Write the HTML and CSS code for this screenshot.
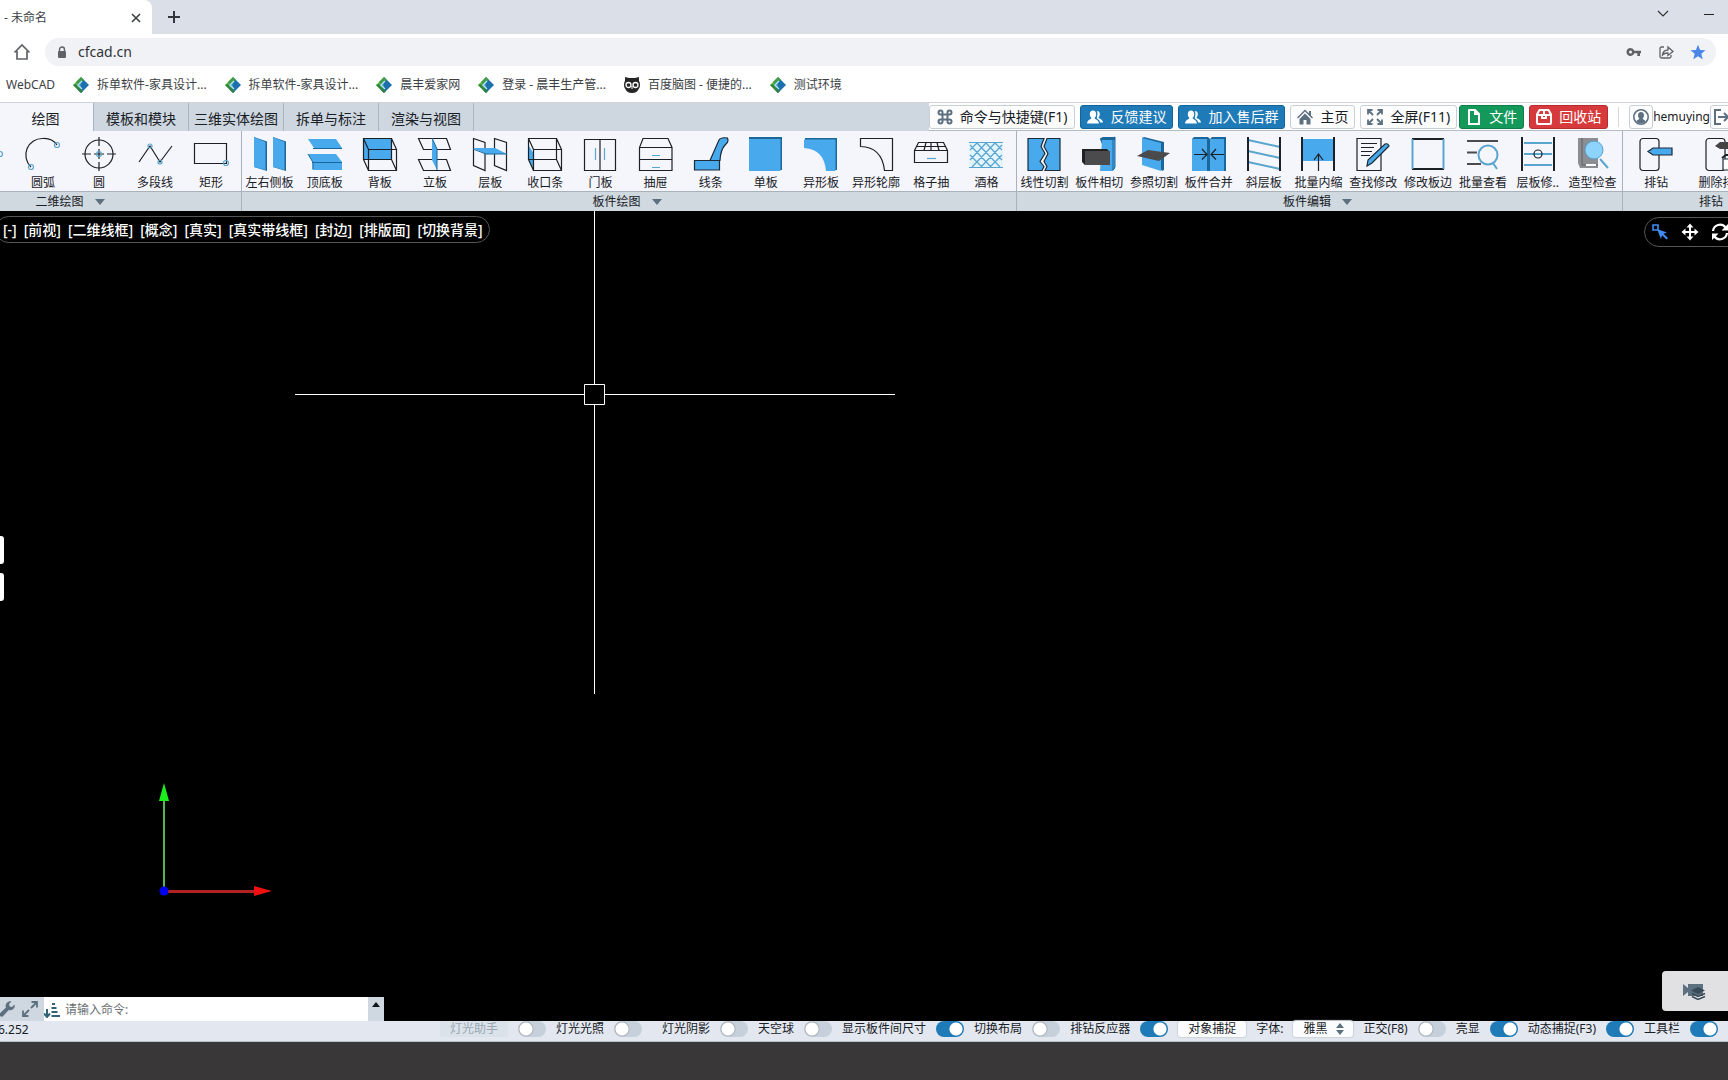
FILE: index.html
```html
<!DOCTYPE html>
<html lang="zh-CN">
<head>
<meta charset="utf-8">
<title>WebCAD - 未命名</title>
<link rel="stylesheet" href="styles.css">
</head>
<body>
<svg class="defs" aria-hidden="true">
  <symbol id="logo" viewBox="0 0 16 16"><path d="M8 0 0 8l8 8Z" fill="#6dbb3e"/><path d="M8 0l8 8-8 8-3-3 3-5Z" fill="#1d6fae"/><path d="M3 5 8 0l3 3-3 2-3 3Z" fill="#3f9c48"/><path d="M0 8l8 8 2-2-5-4-2-3Z" fill="#2f8540"/><path d="M8 4 4 8l4 4Z" fill="#2f92c4"/><path d="M9 4 5 8l4 4" fill="none" stroke="#b9e4ea" stroke-width="1.300"/></symbol>
  <symbol id="people" viewBox="0 0 16 16"><path d="M6 1.500c2 0 3.200 1.500 3.200 3.600C9.200 7 8.300 8.300 7.600 9c0 1.400 4 1.500 4.400 5.500H0C.3 10.500 4.400 10.400 4.400 9 3.600 8.300 2.800 7 2.800 5.100 2.800 3 4 1.500 6 1.500Z"/><path d="M9.800 2c1.900 0 3 1.200 3 3.200 0 1.600-.8 2.800-1.400 3.400 0 1.100 4.200 1.400 4.600 4.900h-2.800c-.5-2.200-1.900-3-3.300-3.900L10 7.500c.8-2 .6-3.900-.2-5.500Z"/></symbol>
</svg>

<header class="browser">
  <div class="tabstrip">
    <div class="btab"><span>- 未命名</span><button class="plain" aria-label="关闭标签"><svg width="10" height="10" viewBox="0 0 10 10"><path d="M1 1l8 8M9 1l-8 8" stroke="#3c4043" stroke-width="1.600"/></svg></button></div>
    <button class="plain newtab" aria-label="新标签"><svg width="14" height="14" viewBox="0 0 14 14"><path d="M7 1v12M1 7h12" stroke="#33363b" stroke-width="2"/></svg></button>
    <div class="winctl">
      <button class="plain" aria-label="搜索标签"><svg width="12" height="8" viewBox="0 0 12 8"><path d="M1 1l5 5 5-5" fill="none" stroke="#333" stroke-width="1.200"/></svg></button>
      <button class="plain" aria-label="最小化"><svg width="12" height="8" viewBox="0 0 12 8"><path d="M1 4.500h10" stroke="#222"/></svg></button>
    </div>
  </div>
  <div class="addressrow">
    <button class="plain" aria-label="主页"><svg width="18" height="18" viewBox="0 0 18 18"><path d="M1.500 9.500 9 2l7.500 7.500M4 8v8h10V8" fill="none" stroke="#5f6368" stroke-width="1.700"/></svg></button>
    <div class="omnibox">
      <svg width="10" height="13" viewBox="0 0 10 13"><path d="M2.500 5V3.500a2.500 2.500 0 0 1 5 0V5" fill="none" stroke="#5f6368" stroke-width="1.400"/><rect x="1" y="5" width="8" height="7" rx="1" fill="#5f6368"/></svg>
      <input class="url" type="text" value="cfcad.cn" aria-label="地址">
      <svg width="16" height="16" viewBox="0 0 16 16"><path fill="#5f6368" fill-rule="evenodd" d="M4.500 4a4 4 0 0 1 3.800 2.700H15v2.600h-1V12h-2.700V9.300h-3A4 4 0 1 1 4.500 4Zm0 2.500a1.500 1.500 0 1 0 0 3 1.500 1.500 0 0 0 0-3Z"/></svg>
      <svg width="16" height="16" viewBox="0 0 16 16" fill="none" stroke="#5f6368" stroke-width="1.300"><path d="M6 3H3.500Q2 3 2 4.500v8Q2 14 3.500 14h8q1.500 0 1.500-1.500V11"/><path d="M4.500 11c.3-3 2-4.800 5.500-5V3l5 4.500-5 4V9C7.500 8.900 5.800 9.500 4.500 11Z"/></svg>
      <svg width="16" height="16" viewBox="0 0 16 16"><path fill="#4a86e8" d="M8 .8 10.100 6l5.400.3-4.200 3.500 1.400 5.400L8 12.200l-4.700 3 1.400-5.400L.5 6.300 5.900 6Z"/></svg>
    </div>
  </div>
  <nav class="bookmarks">
    <a href="#">WebCAD</a>
    <a href="#"><svg width="16" height="16"><use href="#logo"/></svg>拆单软件-家具设计...</a>
    <a href="#"><svg width="16" height="16"><use href="#logo"/></svg>拆单软件-家具设计...</a>
    <a href="#"><svg width="16" height="16"><use href="#logo"/></svg>晨丰爱家网</a>
    <a href="#"><svg width="16" height="16"><use href="#logo"/></svg>登录 - 晨丰生产管...</a>
    <a href="#"><svg width="16" height="16" viewBox="0 0 16 16"><path d="M1 0l4 1h6l4-1v4q1 1 1 4 0 2-1 3.500Q13 16 8 16T1 11.500Q0 10 0 8q0-3 1-4Z" fill="#252525"/><circle cx="4.500" cy="8" r="2.500" fill="none" stroke="#fff" stroke-width="1.300"/><circle cx="11.500" cy="8" r="2.500" fill="none" stroke="#fff" stroke-width="1.300"/><path d="M8 9v3" stroke="#fff"/></svg>百度脑图 - 便捷的...</a>
    <a href="#"><svg width="16" height="16"><use href="#logo"/></svg>测试环境</a>
  </nav>
</header>

<div class="tabrow">
  <div class="tabs">
    <button class="tab active">绘图</button>
    <button class="tab">模板和模块</button>
    <button class="tab">三维实体绘图</button>
    <button class="tab">拆单与标注</button>
    <button class="tab">渲染与视图</button>
  </div>
  <div class="actions">
    <button class="btn roomy"><svg width="16" height="16" viewBox="0 0 16 16" fill="none" stroke="#5c7080" stroke-width="2"><path d="M5.500 5.500h5v5h-5ZM5.500 5.500V3.500a2 2 0 1 0-2 2ZM10.500 5.500h2a2 2 0 1 0-2-2ZM10.500 10.500v2a2 2 0 1 0 2-2ZM5.500 10.500h-2a2 2 0 1 0 2 2Z"/></svg>命令与快捷键(F1)</button>
    <button class="btn blue"><svg width="16" height="16"><use href="#people"/></svg>反馈建议</button>
    <button class="btn blue"><svg width="16" height="16"><use href="#people"/></svg>加入售后群</button>
    <button class="btn"><svg width="16" height="16" viewBox="0 0 16 16" fill="#5c7080"><path d="M8 .5 12 4.500V2h2v4.500l2 2-1 1-7-7-7 7-1-1Z"/><path d="M8 4.500 13.500 10v5.500H9.500V11h-3v4.500h-4V10Z"/></svg>主页</button>
    <button class="btn tight"><svg width="16" height="16" viewBox="0 0 16 16" fill="none" stroke="#5c7080" stroke-width="1.800"><path d="M1 5.500V1h4.500M10.500 1H15v4.500M15 10.500V15h-4.500M5.500 15H1v-4.500M1.500 1.500l4.500 4.500M14.500 1.500 10 6M14.500 14.500 10 10M1.500 14.500 6 10"/></svg>全屏(F11)</button>
    <button class="btn green"><svg width="16" height="16" viewBox="0 0 16 16"><path fill-rule="evenodd" d="M3 0h6.500L14 4.500V16H2V1Q2 0 3 0Zm1 2v12h8V6H8V2Z"/></svg>文件</button>
    <button class="btn red"><svg width="16" height="16" viewBox="0 0 16 16"><path fill-rule="evenodd" d="M3 0h10l3 5v9q0 2-2 2H2q-2 0-2-2V5Zm1 2L2.500 5H7V2Zm5 0v3h4.500L12 2ZM2 7v7h12V7h-3v3H5V7Zm5 0v1h2V7Z"/></svg>回收站</button>
    <span class="divider"></span>
    <span class="user"><button class="btn square" aria-label="用户"><svg width="16" height="16" viewBox="0 0 16 16"><circle cx="8" cy="8" r="7.200" fill="#fff" stroke="#5c7080" stroke-width="1.600"/><path d="M8 3c2 0 3 1.300 3 3.200 0 1.500-.7 2.600-1.300 3.200 0 1.200 2.600 1.200 3 3Q8 16.500 3.300 12.400c.4-1.800 3-1.800 3-3C5.700 8.800 5 7.700 5 6.200 5 4.300 6 3 8 3Z" fill="#5c7080"/></svg></button><span class="name">hemuying</span><button class="btn square" aria-label="退出"><svg width="16" height="16" viewBox="0 0 16 16" fill="none" stroke="#5c7080" stroke-width="2"><path d="M7 1H1v14h6M4 8h10M10 4l4 4-4 4"/></svg></button></span>
  </div>
</div>

<div class="ribbon">
  <section class="group g-2d">
    <div class="tools">
      <button class="tool"><svg viewBox="0 0 34 34"><path class="k" d="M2 30 30 4"/></svg>直线</button>
      <button class="tool"><svg viewBox="0 0 34 34"><path class="k" d="M2 17h24"/><circle class="n" cx="30" cy="17" r="2.500"/></svg>射线</button>
      <button class="tool"><svg viewBox="0 0 34 34"><path class="k" d="M5 30A16.500 16.500 0 0 1 17 1.500Q26 1 31 8"/><circle class="n" cx="5" cy="30" r="2.500"/><circle class="n" cx="31" cy="8" r="2.500"/></svg>圆弧</button>
      <button class="tool"><svg viewBox="0 0 34 34"><circle class="k" cx="17" cy="17" r="14"/><path class="k" d="M17 0v9M17 12v10M17 25v9M0 17h9M12 17h10M25 17h9"/><circle class="n" cx="17" cy="17" r="2.500"/></svg>圆</button>
      <button class="tool"><svg viewBox="0 0 34 34"><path class="k" d="M1 25 12 9l10 16L34 9"/><circle class="n" cx="12" cy="9" r="2"/><circle class="n" cx="22" cy="25" r="2"/></svg>多段线</button>
      <button class="tool"><svg viewBox="0 0 34 34"><path class="k" d="M.5 6.500h32v20H.5Z"/><circle class="n" cx="32" cy="26" r="2.500"/></svg>矩形</button>
    </div>
    <div class="caption">二维绘图<i></i></div>
  </section>
  <section class="group g-board">
    <div class="tools">
      <button class="tool"><svg viewBox="0 0 34 34"><path class="d" d="M1 0 14 4.500V34L1 30ZM20 0 33 4.500V34L20 30Z"/><path class="b" d="M1 0l11.500 5v28L1 30ZM20 0l11.500 5v28L20 30Z"/></svg>左右侧板</button>
      <button class="tool"><svg viewBox="0 0 34 34"><path class="b" d="M0 2h28l6 9H6ZM0 17h28l6 8H5ZM4.500 26H34v7H4.500Z"/><path class="s" d="M5 11.500h29M4 25.500h30M0 17l5 8.500V32"/></svg>顶底板</button>
      <button class="tool"><svg viewBox="0 0 34 34"><path class="b" d="M.5 1.500h28v21H.5Z"/><path class="k" d="M.5 1.500h28v21H.5ZM5.500 12.500h28v21h-28ZM.5 1.500l5 11M28.500 1.500l5 11M.5 22.500l5 11M28.500 22.500l5 11"/></svg>背板</button>
      <button class="tool"><svg viewBox="0 0 34 34"><path class="k" d="M.5 1.500h28l4 11h-27ZM.5 22.500h28l4 11h-27Z"/><path class="b" d="M14 1l5 11v21l-5-10Z"/><path class="s" d="M14 1l5 11v21"/></svg>立板</button>
      <button class="tool"><svg viewBox="0 0 34 34"><path class="k" d="M.5 1.500 12 5.500v28L.5 28.500ZM21.500 1.500l12 4v28l-12-5Z"/><path class="b" d="M0 11h22l12 6H13Z"/><path class="s" d="M0 12l13 5h21"/></svg>层板</button>
      <button class="tool"><svg viewBox="0 0 34 34"><path class="b" d="M1 9l5 8v17l-5-11Z"/><path class="k" d="M.5 1.500h28v21H.5ZM5.500 12.500h28v21h-28ZM.5 1.500l5 11M28.500 1.500l5 11M.5 22.500l5 11M28.500 22.500l5 11"/></svg>收口条</button>
      <button class="tool"><svg viewBox="0 0 34 34"><path class="k" d="M1.500 2.500h31v31h-31ZM17 2.500v31"/><path class="n" d="M12.500 11v12M21.500 11v12"/></svg>门板</button>
      <button class="tool"><svg viewBox="0 0 34 34"><path class="k" d="M4 1.500h25l4 9v23H.5v-23ZM.5 10.500H33M.5 22.500H33"/><path class="n" d="M13 18.500h8M13 30.500h8"/></svg>抽屉</button>
      <button class="tool"><svg viewBox="0 0 34 34"><path class="b o" d="M.5 23.500h25v9.500H.5ZM16 23.500 25 3q1.500-3 8.500-2 1.500 4-2 6.500-5 5-5.500 16Z"/></svg>线条</button>
      <button class="tool"><svg viewBox="0 0 34 34"><path class="d" d="M0 0h33v33H0Z"/><path class="b" d="M0 2h31.500v32H0Z"/></svg>单板</button>
      <button class="tool"><svg viewBox="0 0 34 34"><path class="d" d="M1 1h32v32h-5V6H1Z"/><path class="b" d="M0 2.500h31.500V34H22C21 20 14 12 0 11Z"/></svg>异形板</button>
      <button class="tool"><svg viewBox="0 0 34 34"><path class="k" d="M1.500 1.500h32v32h-8C24 19 17 10 1.500 9.500Z"/></svg>异形轮廓</button>
      <button class="tool"><svg viewBox="0 0 34 34"><path class="k" d="M4.500 5.500h25l4 8v12H.5v-12ZM.5 13.500h33M2.500 9.500h29M12 5.500l-2 8M17 5.500v8M23 5.500l2 8"/><path class="n" d="M13 21.500h9"/></svg>格子抽</button>
      <button class="tool"><svg viewBox="0 0 34 34"><path fill="#e2f4fc" d="M0 5h34v26H0Z"/><path class="n" d="M0 5.500h34M0 30.500h34M1 13 8 6M1 23 17 6M3 30 26 6M12 30 33 8M21 30 33 18M33 13 26 6M33 23 17 6M31 30 8 6M22 30 1 8M13 30 1 18"/></svg>酒格</button>
    </div>
    <div class="caption">板件绘图<i></i></div>
  </section>
  <section class="group g-edit">
    <div class="tools">
      <button class="tool"><svg viewBox="0 0 34 34"><path class="b o" d="M1 1.500h16l-3 8 4 7-5 8 4 5-2 4H1ZM20 1.500h13v32H18l2-4-3-5 4-8-4-7Z"/></svg>线性切割</button>
      <button class="tool"><svg viewBox="0 0 34 34"><path class="d" d="M18 2l3-2h12v31l-3 3Z"/><path class="b" d="M20 3h13v28l-2 3H18Z"/><path class="s" d="M18 2l2-1h11l2-1v30l-2 3V2"/><path fill="#222" d="M0 12l3 2v14l-3-3ZM0 12h25l2 2H3Z"/><path fill="#4b4b4d" d="M3 14h25v14H3Z"/></svg>板件相切</button>
      <button class="tool"><svg viewBox="0 0 34 34"><path class="d" d="M5 1 7 0l20 5v28l-2 1Z"/><path class="b" d="M5 1l19 5v28L5 28Z"/><path fill="#4b4b4d" d="M0 19l11-6 22 3-11 8Z"/></svg>参照切割</button>
      <button class="tool"><svg viewBox="0 0 34 34"><path class="d" d="M0 2 2 0h14l2 2 2-2h14v34H0Z"/><path class="b" d="M0 2h15v32H0ZM18 2h14v32H18Z"/><path class="k" d="M2 17.500h13M10 12l5 5.500-5 5M32 17.500H19M24 12l-5 5.500 5 5"/></svg>板件合并</button>
      <button class="tool"><svg viewBox="0 0 34 34"><path class="n w" d="M1 3l32 7M1 14l32 7M1 25l32 7"/><path class="k w" d="M1 0v34M33 0v34"/></svg>斜层板</button>
      <button class="tool"><svg viewBox="0 0 34 34"><path class="b" d="M1 2h32v22H1Z"/><path class="k w" d="M1 0v34M33 0v34"/><path class="k" d="M17.500 34V17M13 23l4.500-6 4.500 6"/></svg>批量内缩</button>
      <button class="tool"><svg viewBox="0 0 34 34"><path class="k" d="M1 1.500h24v32H1ZM5 6.500h16M5 10.500h13M5 14.500h11M5 18.500h9"/><path class="b o" d="M11 29l1-6L29 7q3-1 4 2L16 26Z"/></svg>查找修改</button>
      <button class="tool"><svg viewBox="0 0 34 34"><path class="k w" d="M1 2h32M1 32h32"/><path class="n w" d="M1.500 2v30M32.500 2v30"/></svg>修改板边</button>
      <button class="tool"><svg viewBox="0 0 34 34"><path d="M1 4h31M1 15.500h10M1 27h14" stroke="#4b4b4d" stroke-width="2"/><circle class="n w" cx="22" cy="18" r="9.500"/><path class="n w" d="M27 26l4 6"/></svg>批量查看</button>
      <button class="tool"><svg viewBox="0 0 34 34"><path class="n w" d="M3 6h28M3 17h28M3 28h28"/><circle class="k" cx="17" cy="17" r="4"/><path class="k w" d="M1 0v34M33 0v34"/></svg>层板修..</button>
      <button class="tool"><svg viewBox="0 0 34 34"><path fill="#8b8d92" d="M2 1h20v25H2ZM2 26h20v5H4Z"/><path d="M6 1v27M6 28h16" stroke="#5d6066"/><path d="M10 28h10" stroke="#fff" stroke-width="2"/><path class="n w" d="M24 22l8 9"/><circle cx="18" cy="13" r="9" fill="#8dd3fb" stroke="#569fd0"/></svg>造型检查</button>
    </div>
    <div class="caption">板件编辑<i></i></div>
  </section>
  <section class="group g-drill">
    <div class="tools">
      <button class="tool"><svg viewBox="0 0 34 34"><rect class="k" x="1" y="1.500" width="19" height="32" rx="3"/><path class="b o" d="M9 14.500 14 11h19v7H14Z"/></svg>排钻</button>
      <button class="tool"><svg viewBox="0 0 34 34"><rect class="k" x="1" y="1.500" width="19" height="32" rx="3"/><path fill="#444" d="M10 9l5-4h19v7H15Z"/><path class="k w" d="M17 21l4-3h12"/><path fill="#fff" class="o" d="M18 22h14v11H18Z"/></svg>删除排钻</button>
      <button class="tool"><svg viewBox="0 0 34 34"><rect class="k" x="1" y="1.500" width="19" height="32" rx="3"/></svg>检查</button>
    </div>
    <div class="caption">排钻<i></i></div>
  </section>
</div>

<main class="canvas">
  <nav class="views">
    <button>[-]</button><button>[前视]</button><button>[二维线框]</button><button>[概念]</button><button>[真实]</button><button>[真实带线框]</button><button>[封边]</button><button>[排版面]</button><button>[切换背景]</button>
  </nav>
  <div class="modes">
    <button class="plain" aria-label="选择"><svg width="18" height="18" viewBox="0 0 18 18"><path d="M2 2h5v5H2Z" fill="none" stroke="#3f8cf0" stroke-width="1.600"/><path d="M6 6l10 3.500-3.500 1.200L17 15l-1.500 1.500-4.500-4.300L10 16Z" fill="#3f8cf0"/></svg></button>
    <button class="plain" aria-label="平移"><svg width="18" height="18" viewBox="0 0 18 18"><path d="M9 3v12M3 9h12" stroke="#fff" stroke-width="2"/><path d="M9 .5l3.500 4h-7ZM9 17.500l3.500-4h-7ZM.5 9l4-3.500v7ZM17.500 9l-4-3.500v7Z" fill="#fff"/></svg></button>
    <button class="plain" aria-label="旋转"><svg width="18" height="18" viewBox="0 0 18 18"><path d="M2 8a7 7 0 0 1 12.500-3.500M16 10A7 7 0 0 1 3.500 13.500" fill="none" stroke="#fff" stroke-width="2.200"/><path d="M17 1v6.500h-6.500ZM1 17v-6.500h6.500Z" fill="#fff"/></svg></button>
  </div>
  <svg class="crosshair" width="600" height="484" viewBox="0 0 600 484"><path d="M299.500 0v174M299.500 195v289M0 184.500h289M310 184.500h290M289.500 174.500h20v20h-20Z" fill="none" stroke="#fff"/></svg>
  <svg class="axes" width="120" height="120" viewBox="0 0 120 120"><path d="M10 18v92" stroke="#4fb84f" stroke-width="2"/><path d="M10 0l5 18H5Z" fill="#1bf01b"/><path d="M10 108.500h90" stroke="#b32222" stroke-width="3"/><path d="M118 108l-18-5v10Z" fill="#f01010"/><circle cx="10" cy="108" r="4.500" fill="#0000f0"/></svg>
  <div class="handles"><button aria-label="展开面板"></button><button aria-label="展开图层"></button></div>
  <button class="camera" aria-label="相机"><svg width="24" height="18" viewBox="0 0 24 18"><path fill="#5c7080" d="M0 2l5 4V2h15v12H5v-4l-5 4Z"/><path fill="#394b59" d="M15 5l7 3.500-7 3.500-7-3.500Z"/><path d="M9 11.500l6 3 7-3M9 14.500l6 3 7-3" fill="none" stroke="#394b59" stroke-width="1.400"/></svg></button>
  <form class="command">
    <div class="cmdtools">
      <svg width="16" height="16" viewBox="0 0 16 16"><path fill="#5c7080" d="M15.500 3.500A4.500 4.500 0 0 1 9.700 9L4 15.200Q2.500 16.500 1 15t.2-3L7 6.500A4.500 4.500 0 0 1 12.500.5L10 3l.7 2.500L13 6Z"/></svg>
      <svg width="16" height="16" viewBox="0 0 16 16"><path fill="none" stroke="#5c7080" stroke-width="1.800" d="M9 7l5.500-5.500M9.500 1H15v5.500M7 9l-5.500 5.500M1 9.500V15h5.500"/></svg>
    </div>
    <label class="cmdfield"><svg width="16" height="16" viewBox="0 0 16 16"><path d="M3 7v7M0 11.500l3 3.500 3-3.500M8 2h3M7.500 6h5M7.500 10h6M7.500 14H16" fill="none" stroke="#2f6478" stroke-width="2"/></svg><input type="text" placeholder="请输入命令:" aria-label="请输入命令"></label>
    <button type="button" class="expand" aria-label="展开"><i></i></button>
  </form>
</main>

<div class="status">
  <output>6.252</output>
  <div class="switches">
    <button class="small" disabled>灯光助手</button>
    <input type="checkbox" aria-label="灯光助手">
    <label class="wide">灯光光照<input type="checkbox"></label>
    <label>灯光阴影<input type="checkbox"></label>
    <label>天空球<input type="checkbox"></label>
    <label>显示板件间尺寸<input type="checkbox" checked></label>
    <label>切换布局<input type="checkbox"></label>
    <label>排钻反应器<input type="checkbox" checked></label>
    <button class="small">对象捕捉</button>
    <label>字体:<span class="pick"><select><option>雅黑</option></select><svg width="8" height="12" viewBox="0 0 8 12"><path fill="#5c7080" d="M4 0l4 5H0ZM4 12l4-5H0Z"/></svg></span></label>
    <label>正交(F8)<input type="checkbox"></label>
    <label>亮显<input type="checkbox" checked></label>
    <label>动态捕捉(F3)<input type="checkbox" checked></label>
    <label>工具栏<input type="checkbox" checked></label>
  </div>
</div>
<footer class="desk"></footer>
</body>
</html>
```
FILE: styles.css
```css
* { box-sizing: border-box; }
body {
  margin: 0;
  height: 100vh;
  display: flex;
  flex-direction: column;
  overflow: hidden;
  background: #fff;
  color: #182026;
  font: 12px/18px "Noto Sans", "Noto Sans CJK SC", sans-serif;
}
button, input, select { font: inherit; color: inherit; margin: 0; }
button { border: 0; padding: 0; background: none; white-space: nowrap; }
svg { display: block; flex: none; }
.defs { display: none; }
.plain { display: grid; place-items: center; }

/* browser chrome */
.browser { border-bottom: 1px solid #cfd2d8; }
.tabstrip { display: flex; align-items: center; height: 34px; background: #dbdfe7; }
.btab {
  display: flex;
  align-items: center;
  justify-content: space-between;
  width: 152px;
  height: 34px;
  padding: 1px 11px 0 4px;
  background: #fff;
  border-radius: 0 8px 0 0;
  color: #3c4043;
}
.newtab { margin-left: 15px; }
.winctl { display: flex; gap: 34px; margin: 0 13px 6px auto; }
.addressrow { display: flex; align-items: center; gap: 14px; padding: 4px 12px 0 13px; }
.omnibox {
  flex: 1;
  display: flex;
  align-items: center;
  gap: 16px;
  height: 28px;
  padding: 0 10px 0 12px;
  border-radius: 14px;
  background: #f1f2f6;
}
.url {
  flex: 1;
  min-width: 0;
  margin-left: -5px;
  padding: 0;
  border: 0;
  outline: 0;
  background: none;
  color: #303236;
  font-size: 14px;
}
.bookmarks { display: flex; align-items: center; gap: 18px; height: 36px; padding: 1px 0 0 6px; }
.bookmarks a { display: flex; align-items: center; gap: 8px; color: #3c4043; text-decoration: none; white-space: nowrap; }

/* ribbon tabs and right-hand actions */
.tabrow { display: flex; justify-content: space-between; height: 28px; background: #ced7e0; }
.tabs { display: flex; margin-left: -2px; }
.tab { width: 95px; padding-top: 3px; border-right: 1px solid #a9b4bf; font-size: 14px; }
.tab.active { width: 96px; background: #f5f6fb; }
.actions {
  display: flex;
  align-items: center;
  gap: 5px;
  margin-right: -6px;
  background: #fff;
  border-bottom: 1px solid #b4bcc4;
}
.btn {
  display: flex;
  align-items: center;
  justify-content: center;
  gap: 7px;
  height: 24px;
  padding: 0 6px;
  border-radius: 3px;
  border: 1px solid #c9cfd5;
  background: #fdfdfe;
  font-size: 14px;
}
.btn.blue, .btn.green, .btn.red { color: #fff; fill: #fff; }
.btn.blue { background: #1f7bb8; border-color: #14639a; }
.btn.green { background: #15995b; border-color: #0d7d49; }
.btn.red { background: #d63a3c; border-color: #b52d2f; }
.btn.roomy { padding: 0 7px; }
.btn.tight { margin-right: -3px; }
.btn.square { width: 24px; padding: 0; }
.divider { width: 1px; height: 20px; margin: 0 5px; background: #d5d9dd; }
.user { display: flex; align-items: center; }

/* ribbon */
.ribbon { display: flex; margin-left: -97px; background: #f5f6fb; }
.group { flex: none; border-right: 1px solid #a9b2ba; }
.g-2d { width: 339px; }
.g-board { width: 775px; }
.g-edit { width: 606px; }
.g-drill { width: 202px; }
.tools { display: flex; height: 60px; padding: 6px 2px 0 0; background: #f5f6fb; }
.tool { flex: 1 1 0; min-width: 0; display: flex; flex-direction: column; align-items: center; gap: 3px; line-height: 18px; }
.tool svg { width: 34px; height: 34px; overflow: visible; }
.k { fill: none; stroke: #1c2127; stroke-width: 1.2; }
.n { fill: none; stroke: #5aa5cf; stroke-width: 1.2; }
.b { fill: #48a9ed; }
.d { fill: #1b6799; }
.s { fill: none; stroke: #1b6799; stroke-width: 1; }
.o { stroke: #1c2b38; stroke-width: 1.2; }
.w { stroke-width: 2; }
.caption {
  display: flex;
  align-items: center;
  justify-content: center;
  gap: 11px;
  height: 20px;
  padding-right: 4px;
  background: #d0d9e0;
  border-top: 1px solid #a9b2ba;
}
.caption i { border: 5px solid transparent; border-top: 6px solid #5c7080; border-bottom: 0; }

/* drawing area */
.canvas { position: relative; flex: 1; min-height: 0; overflow: hidden; background: #000; }
.views {
  position: absolute;
  left: -5px;
  top: 5px;
  display: flex;
  gap: 7px;
  height: 27px;
  padding: 0 6px 0 7px;
  border: 1px solid #555;
  border-radius: 14px;
  color: #fff;
  font-size: 14px;
  font-weight: 500;
}
.modes {
  position: absolute;
  right: -8px;
  top: 6px;
  display: flex;
  gap: 12px;
  height: 30px;
  padding: 0 6px;
  border: 1px solid #555;
  border-radius: 15px 0 0 15px;
}
.crosshair { position: absolute; left: 295px; top: -1px; }
.axes { position: absolute; left: 154px; bottom: 118px; }
.handles { position: absolute; left: 0; top: 325px; display: grid; gap: 9px; }
.handles button { width: 4px; height: 28px; background: #fff; border-radius: 0 3px 3px 0; }
.camera {
  position: absolute;
  right: 0;
  bottom: 10px;
  display: grid;
  place-items: center;
  width: 66px;
  height: 40px;
  background: #e1e1e3;
  border-radius: 4px 0 0 4px;
}
.command { position: absolute; left: 0; bottom: 0; display: flex; height: 24px; width: 384px; background: #fff; }
.cmdtools { display: flex; align-items: center; justify-content: flex-end; gap: 7px; width: 44px; padding-right: 6px; background: #cfd8e0; }
.cmdfield { flex: 1; display: flex; align-items: center; gap: 5px; padding-top: 1px; }
.cmdfield input { flex: 1; min-width: 0; padding: 0; border: 0; outline: 0; background: none; }
.cmdfield input::placeholder { color: #6b6f73; opacity: 1; }
.expand { display: flex; justify-content: center; align-items: flex-start; width: 16px; padding-top: 5px; background: #cfd8e0; }
.expand i { border: 4px solid transparent; border-bottom: 5px solid #10161a; border-top: 0; }

/* status bar */
.status { display: flex; justify-content: space-between; height: 21px; background: #e3e7ef; border-bottom: 1px solid #b5c2c6; }
.status output { margin-left: -2px; }
.switches { display: flex; align-items: flex-start; gap: 10px; height: 16px; padding-right: 10px; line-height: 16px; white-space: nowrap; }
.switches label { display: flex; align-items: center; gap: 10px; }
.switches .wide { margin-right: 10px; }
.switches input {
  appearance: none;
  width: 28px;
  height: 16px;
  border-radius: 8px;
  background: radial-gradient(circle at 8px 8px, #fff 6px, #a8b0b8 7px, #c5d0da 8px);
}
.switches input:checked { background: radial-gradient(circle at 20px 8px, #fff 6px, #1f7bb8 7px); }
.small { height: 16px; padding: 0 10px; background: #fbfcfd; border-radius: 3px; box-shadow: 0 0 1px 1px #ccd3da; }
.small:disabled { color: #9aa7b2; background: #dbe2ea; box-shadow: none; }
.pick { position: relative; display: block; }
.pick select { display: block; appearance: none; width: 60px; height: 16px; padding: 0 10px; border: 0; border-radius: 3px; background: #fbfcfd; box-shadow: 0 0 1px 1px #ccd3da; line-height: 16px; }
.pick svg { position: absolute; right: 9px; top: 2px; pointer-events: none; }
.desk { height: 38px; background: #393738; }
```
